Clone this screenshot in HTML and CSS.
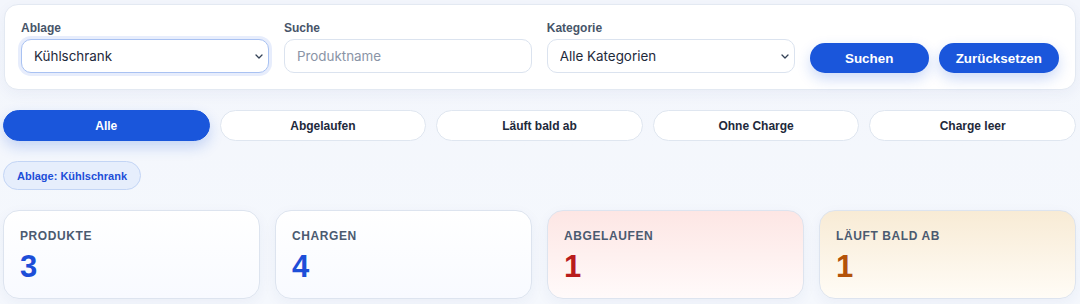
FILE: index.html
```html
<!DOCTYPE html>
<html lang="de">
<head>
  <meta charset="UTF-8" />
  <meta name="viewport" content="width=device-width, initial-scale=1.0"/>
  <title>Vorrat</title>
  <link rel="stylesheet" href="styles.css">
</head>
<body>
  <div class="page">
    <form class="filter-card">
      <label class="field">
        <span class="field-label">Ablage</span>
        <span class="select-wrap">
          <select class="control focused">
            <option>Kühlschrank</option>
          </select>
          <svg class="chevron" viewBox="0 0 8 5" width="8" height="5"><path d="M1 1l3 3 3-3" fill="none" stroke="#334155" stroke-width="1.3" stroke-linecap="round" stroke-linejoin="round"/></svg>
        </span>
      </label>
      <label class="field">
        <span class="field-label">Suche</span>
        <input class="control" type="text" placeholder="Produktname">
      </label>
      <label class="field">
        <span class="field-label">Kategorie</span>
        <span class="select-wrap">
          <select class="control">
            <option>Alle Kategorien</option>
          </select>
          <svg class="chevron" viewBox="0 0 8 5" width="8" height="5"><path d="M1 1l3 3 3-3" fill="none" stroke="#334155" stroke-width="1.3" stroke-linecap="round" stroke-linejoin="round"/></svg>
        </span>
      </label>
      <div class="actions">
        <button type="button" class="btn">Suchen</button>
        <button type="button" class="btn">Zurücksetzen</button>
      </div>
    </form>

    <div class="tabs">
      <button class="tab active">Alle</button>
      <button class="tab">Abgelaufen</button>
      <button class="tab">Läuft bald ab</button>
      <button class="tab">Ohne Charge</button>
      <button class="tab">Charge leer</button>
    </div>

    <div class="chips">
      <span class="chip">Ablage: Kühlschrank</span>
    </div>

    <div class="stats">
      <div class="stat">
        <div class="stat-label">Produkte</div>
        <div class="stat-value">3</div>
      </div>
      <div class="stat">
        <div class="stat-label">Chargen</div>
        <div class="stat-value">4</div>
      </div>
      <div class="stat danger">
        <div class="stat-label">Abgelaufen</div>
        <div class="stat-value">1</div>
      </div>
      <div class="stat warning">
        <div class="stat-label">Läuft bald ab</div>
        <div class="stat-value">1</div>
      </div>
    </div>
  </div>
</body>
</html>
```

FILE: styles.css
```css
* {
  box-sizing: border-box;
}
body {
  margin: 0;
  font-family: 'Liberation Sans', Arial, sans-serif;
  background: linear-gradient(180deg, #f3f6fc 0%, #f5f8fd 100%);
  color: #1e293b;
  height: 304px;
  overflow: hidden;
}
.page {
  display: flex;
  flex-direction: column;
  gap: 20px;
  padding: 4px 4px 0 3px;
}
.filter-card {
  display: grid;
  grid-template-columns: repeat(3, 1fr) auto;
  column-gap: 15px;
  align-items: end;
  margin: 0 0 0 1px;
  padding: 16px;
  background: #fff;
  border: 1px solid #e3e9f2;
  border-radius: 14px;
  box-shadow: 0 4px 14px rgba(30, 64, 140, 0.05);
}
.field {
  display: flex;
  flex-direction: column;
  gap: 4px;
}
.field-label {
  font-size: 12px;
  font-weight: bold;
  line-height: 14px;
  color: #475569;
}
.select-wrap {
  position: relative;
  display: block;
}
.control {
  display: block;
  width: 100%;
  height: 34px;
  padding: 0 12px;
  font-family: Inter, 'Noto Sans', sans-serif;
  font-size: 13.4px;
  color: #1e293b;
  background: #fff;
  border: 1px solid #dbe3ef;
  border-radius: 10px;
  outline: none;
  appearance: none;
  -webkit-appearance: none;
}
.control::placeholder {
  color: #8a94a6;
}
.control.focused {
  border-color: #a9c2f2;
  box-shadow: 0 0 0 3px rgba(59, 110, 230, 0.12);
}
.chevron {
  position: absolute;
  right: 6px;
  top: 15px;
  pointer-events: none;
}
.actions {
  display: flex;
  gap: 10px;
}
.btn {
  height: 30px;
  min-width: 119px;
  padding: 0 17px;
  font-family: 'Liberation Sans', Arial, sans-serif;
  font-size: 13.4px;
  font-weight: bold;
  color: #fff;
  background: #1a56db;
  border: none;
  border-radius: 999px;
  box-shadow: 0 6px 14px rgba(26, 86, 219, 0.22);
  cursor: pointer;
}
.tabs {
  display: grid;
  grid-template-columns: repeat(5, 1fr);
  gap: 10px;
}
.tab {
  height: 31px;
  font-family: 'Liberation Sans', Arial, sans-serif;
  font-size: 12px;
  font-weight: bold;
  color: #1e293b;
  background: #fff;
  border: 1px solid #dfe6f0;
  border-radius: 999px;
  cursor: pointer;
}
.tab.active {
  color: #fff;
  background: #1a56db;
  border-color: #1a56db;
  box-shadow: 0 6px 14px rgba(26, 86, 219, 0.22);
}
.chips {
  display: flex;
}
.chip {
  display: inline-flex;
  align-items: center;
  height: 29px;
  padding: 0 13px;
  font-size: 11px;
  font-weight: bold;
  color: #1d4ed8;
  background: #e6eefc;
  border: 1px solid #c3d5f5;
  border-radius: 999px;
}
.stats {
  display: grid;
  grid-template-columns: repeat(4, 1fr);
  gap: 15px;
}
.stat {
  height: 89px;
  padding: 18px 16px 0;
  background: linear-gradient(180deg, #ffffff 0%, #f8faff 100%);
  border: 1px solid #dde4ef;
  border-radius: 16px;
  box-shadow: 0 4px 14px rgba(30, 64, 140, 0.05);
}
.stat-label {
  font-size: 12px;
  font-weight: bold;
  letter-spacing: 0.6px;
  text-transform: uppercase;
  color: #4b5a70;
  line-height: 14px;
}
.stat-value {
  margin-top: 7px;
  font-size: 31px;
  font-weight: bold;
  line-height: 34px;
  color: #1d4ed8;
}
.stat.danger {
  background: linear-gradient(180deg, #fde6e4 0%, #fffafa 100%);
}
.stat.danger .stat-value {
  color: #b91c1c;
}
.stat.warning {
  background: linear-gradient(180deg, #f8ebd5 0%, #fffcf6 100%);
}
.stat.warning .stat-value {
  color: #b45309;
}
```
